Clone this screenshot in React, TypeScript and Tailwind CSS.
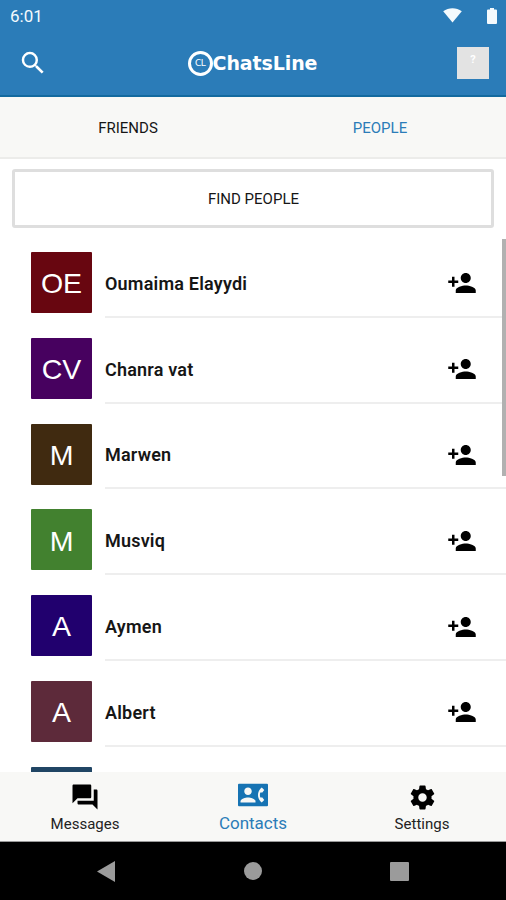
import { MdSearch, MdPersonAdd, MdForum } from 'react-icons/md';

const people = [
    { name: 'Oumaima Elayydi', initials: 'OE', color: 'bg-[#680610]' },
    { name: 'Chanra vat', initials: 'CV', color: 'bg-[#47015f]' },
    { name: 'Marwen', initials: 'M', color: 'bg-[#402a10]' },
    { name: 'Musviq', initials: 'M', color: 'bg-[#42812f]' },
    { name: 'Aymen', initials: 'A', color: 'bg-[#21006e]' },
    { name: 'Albert', initials: 'A', color: 'bg-[#5d2a3a]' },
    { name: '', initials: '', color: 'bg-[#204564]' },
];

function StatusBar() {
    return (
        <div className="flex h-8 items-center justify-between pl-[10px] pr-[9px] text-[#f4fafd]">
            <span className="text-[17px] leading-8">6:01</span>
            <div className="flex items-center gap-[25px]">
                <svg width="19" height="16" viewBox="0 0 19 16" fill="currentColor">
                    <path d="M9.5 14.5 0.2 3.2C5.5-.8 13.5-.8 18.8 3.2Z" />
                </svg>
                <svg width="10" height="17" viewBox="0 0 10 17" fill="currentColor">
                    <path d="M3 0h4v1.5h2q1 0 1 1V15q0 1-1 1H1q-1 0-1-1V2.5q0-1 1-1h2Z" />
                </svg>
            </div>
        </div>
    );
}

function Logo() {
    return (
        <div className="flex items-center font-['DejaVu_Sans',sans-serif] text-white">
            <div className="flex size-[25px] items-center justify-center rounded-full border-[3px] border-white text-[9px] leading-none tracking-[-0.5px]">
                CL
            </div>
            <span className="text-[19px] font-bold leading-[30px] tracking-[-0.1px]">ChatsLine</span>
        </div>
    );
}

function ContactIcon() {
    return (
        <svg width="30" height="30" viewBox="0 0 24 24" fill="#1673b3">
            <path d="M23.2 3H.8Q0 3 0 3.8v16.4Q0 21 .8 21h22.4q.8 0 .8-.8V3.800Q24 3 23.200 3zM8 6c1.660 0 3 1.340 3 3s-1.340 3-3 3-3-1.340-3-3 1.340-3 3-3zm6 12H2v-1c0-2 4-3.100 6-3.100s6 1.100 6 3.100v1zm3.850-4h1.640L21 16l-1.990 1.990c-1.310-.980-2.280-2.380-2.730-3.990-.180-.640-.280-1.310-.280-2s.100-1.360.280-2c.450-1.620 1.420-3.010 2.730-3.990L21 8l-1.510 2h-1.640c-.220.630-.350 1.300-.350 2s.130 1.370.350 2z" />
        </svg>
    );
}

function GearIcon() {
    return (
        <svg width="29" height="29" viewBox="0 0 24 24" fill="#000">
            <path d="M19.430 12.980c.040-.320.070-.640.070-.980s-.030-.660-.070-.980l2.110-1.650c.190-.150.240-.420.120-.640l-2-3.460c-.120-.220-.390-.300-.610-.220l-2.490 1c-.520-.400-1.080-.730-1.690-.980l-.380-2.650C14.460 2.180 14.250 2 14 2h-4c-.250 0-.460.180-.490.420l-.380 2.650c-.610.250-1.170.590-1.690.980l-2.490-1c-.230-.090-.490 0-.610.220l-2 3.460c-.130.220-.070.490.120.640l2.110 1.650c-.040.320-.070.650-.070.980s.030.660.070.980l-2.110 1.650c-.190.150-.240.420-.120.640l2 3.460c.120.220.390.300.610.220l2.490-1c.520.400 1.080.730 1.690.980l.380 2.650c.030.240.240.420.490.420h4c.250 0 .460-.180.490-.420l.380-2.650c.610-.250 1.170-.590 1.690-.980l2.490 1c.230.090.490 0 .610-.220l2-3.460c.120-.220.070-.490-.120-.640l-2.110-1.650zM12 15.500c-1.930 0-3.500-1.570-3.500-3.500s1.570-3.500 3.500-3.500 3.500 1.570 3.500 3.500-1.570 3.500-3.500 3.500z" />
        </svg>
    );
}

function PersonRow({ name, initials, color }: { name: string; initials: string; color: string }) {
    return (
        <div className="flex h-[85.8px] shrink-0 pl-[31px]">
            <div className={`mt-[13px] flex size-[61px] shrink-0 items-center justify-center rounded-[1px] pt-[2px] font-['Liberation_Sans',sans-serif] text-[28.5px] text-white ${color}`}>
                {initials}
            </div>
            <div className="mb-[7px] ml-[13px] flex flex-1 items-center justify-between border-b-2 border-[#eeeeee] pr-[29px] pt-[12px]">
                <span className="text-[18px] font-semibold tracking-[0.2px] text-[#161616]">{name}</span>
                <MdPersonAdd size={30} className="text-black" />
            </div>
        </div>
    );
}

export default function App() {
    return (
        <div className="flex h-[900px] w-[506px] flex-col overflow-hidden bg-white font-[Roboto,sans-serif]">
            <header className="h-[97px] shrink-0 border-b-2 border-[#136a9f] bg-[#2b7cb8]">
                <StatusBar />
                <div className="flex h-[62px] items-center justify-between pl-[18px] pr-[17px]">
                    <MdSearch size={30} className="text-white" />
                    <Logo />
                    <div className="flex size-8 items-start justify-center bg-[#e3e3e3] pt-[5px] text-[11px] font-bold leading-4 text-white">?</div>
                </div>
            </header>

            <nav className="flex h-[62px] shrink-0 items-center border-b-2 border-[#ececea] bg-[#f8f8f6] pl-[2px] pt-[2px] text-[15px] text-[#161616]">
                <span className="flex-1 text-center">FRIENDS</span>
                <span className="flex-1 text-center text-[#2b7cb8]">PEOPLE</span>
            </nav>

            <button className="mx-3 mt-[10px] h-[59px] shrink-0 rounded-[3px] border-[3px] border-[#dedede] pl-px pt-px text-[15px] text-[#161616]">
                FIND PEOPLE
            </button>

            <main className="relative mt-[11px] flex min-h-0 flex-1 flex-col overflow-hidden">
                {people.map((person, i) => (
                    <PersonRow key={i} {...person} />
                ))}
                <div className="absolute right-0 top-0 h-[237px] w-1 bg-[#b1b1b1]" />
            </main>

            <footer className="flex h-[70px] shrink-0 border-b border-[#999] bg-[#f8f8f6] text-[15px] text-[#222]">
                <div className="flex flex-1 flex-col items-center pl-px pt-[10px]">
                    <MdForum size={30} className="text-black" />
                    <span className="leading-[24px]">Messages</span>
                </div>
                <div className="flex flex-1 flex-col items-center pt-[8px] text-[#2b7cb8]">
                    <ContactIcon />
                    <span className="text-[17px] leading-[27px]">Contacts</span>
                </div>
                <div className="flex flex-1 flex-col items-center pl-px pt-[11px]">
                    <GearIcon />
                    <span className="leading-[24px]">Settings</span>
                </div>
            </footer>

            <div className="flex h-[58px] shrink-0 items-center justify-between bg-black pl-[97px] pr-[97px]">
                <svg width="18" height="21" viewBox="0 0 18 21" fill="#9b9b9b"><path d="M18 0v21L0 10.5Z" /></svg>
                <div className="size-[18px] rounded-full bg-[#9b9b9b]" />
                <div className="size-[19px] rounded-[1px] bg-[#9b9b9b]" />
            </div>
        </div>
    );
}
